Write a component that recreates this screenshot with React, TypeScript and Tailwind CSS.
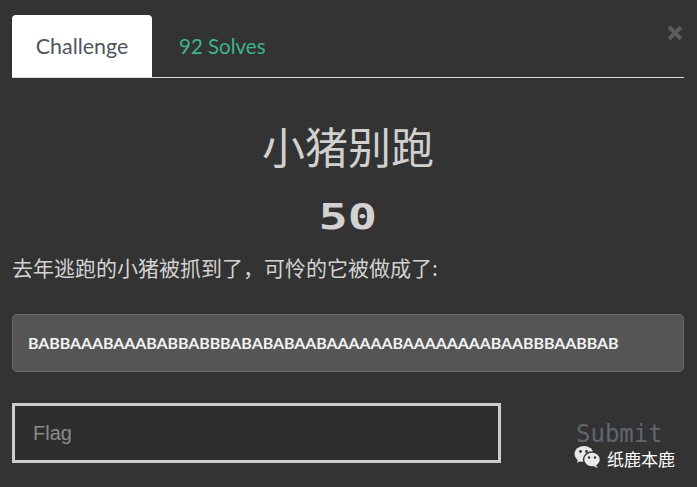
import React from 'react';

const CODE = 'BABBAAABAAABABBABBBABABABAABAAAAAABAAAAAAAABAABBBAABBAB';

// Small WeChat-style watermark mark: two overlapping chat bubbles
const WeChatMark = () => (
  <svg width="27" height="23" viewBox="0 0 27 23">
    <ellipse cx="10" cy="9" rx="9.5" ry="8" fill="#e8e8e8" />
    <path d="M4 14 L3 18 L8 15 Z" fill="#e8e8e8" />
    <ellipse cx="18" cy="14.5" rx="8.5" ry="7.5" fill="#e8e8e8" stroke="#333333" strokeWidth="1.5" />
    <path d="M22 20 L24 23 L19 21 Z" fill="#e8e8e8" />
    <circle cx="6.5" cy="6.5" r="1.4" fill="#333333" />
    <circle cx="12.5" cy="6.5" r="1.4" fill="#333333" />
    <circle cx="15" cy="12.5" r="1.2" fill="#333333" />
    <circle cx="21" cy="12.5" r="1.2" fill="#333333" />
  </svg>
);

export default function App() {
  return (
    <div className="relative w-[697px] h-[487px] overflow-hidden bg-[#333333] font-['Lato','Noto_Sans_CJK_SC',sans-serif]">
      <div className="pl-[12px] pr-[13px] pt-[15px]">
        {/* Tabs */}
        <div className="flex items-stretch border-b border-[#dddddd] h-[63px]">
          <div className="w-[140px] bg-white rounded-t-[4px] flex items-center justify-center text-[21.4px] text-[#50555d]">
            Challenge
          </div>
          <div className="flex items-center pl-[27px] text-[20.5px] text-[#3db389]">92 Solves</div>
        </div>

        {/* Title + value */}
        <div className="mt-[43px] text-center text-[43px] leading-[48px] font-normal text-[#d0d0d0] font-['Noto_Sans_CJK_SC',sans-serif]">
          小猪别跑
        </div>
        <div className="mt-[26px] text-center leading-[44px]">
          <span className="inline-block scale-x-[1.35] text-[36px] font-bold text-[#d2d2d2] font-['DejaVu_Sans_Mono',monospace]">
            50
          </span>
        </div>

        {/* Description */}
        <div className="mt-[8px] text-[21px] leading-[28px] text-[#d2d2d2] font-['Noto_Sans_CJK_SC',sans-serif]">
          去年逃跑的小猪被抓到了，可怜的它被做成了:
        </div>

        {/* Cipher text */}
        <div className="mt-[33px] h-[58px] rounded-[5px] border border-[#6a6a6a] bg-[#555555] flex items-center pl-[15px] text-[16px] tracking-[-0.1px] font-bold text-[#f2f2f2]">
          {CODE}
        </div>

        {/* Flag input + submit */}
        <div className="mt-[31px] flex items-center">
          <div className="w-[489px] h-[60px] border-[3px] border-[#cccccc] bg-[#2e2e2e] flex items-center pl-[18px] text-[20px] text-[#8a8a8a] font-['Liberation_Sans',sans-serif]">
            Flag
          </div>
          <div className="ml-[75px] mt-[1px] text-[24px] leading-[18px] text-[#5f666e] font-['DejaVu_Sans_Mono',monospace]">
            Submit
          </div>
        </div>
      </div>

      {/* Close */}
      <svg className="absolute left-[667px] top-[25px]" width="16" height="16" viewBox="0 0 16 16">
        <path d="M2 2 L14 14 M14 2 L2 14" stroke="#5b5b5b" strokeWidth="4" strokeLinecap="butt" />
      </svg>

      {/* Watermark */}
      <div className="absolute left-[574px] top-[445px] flex items-center gap-[6px]">
        <WeChatMark />
        <span className="mt-[4px] text-[17px] leading-[18px] text-white font-['Noto_Sans_CJK_SC',sans-serif]">纸鹿本鹿</span>
      </div>
    </div>
  );
}
